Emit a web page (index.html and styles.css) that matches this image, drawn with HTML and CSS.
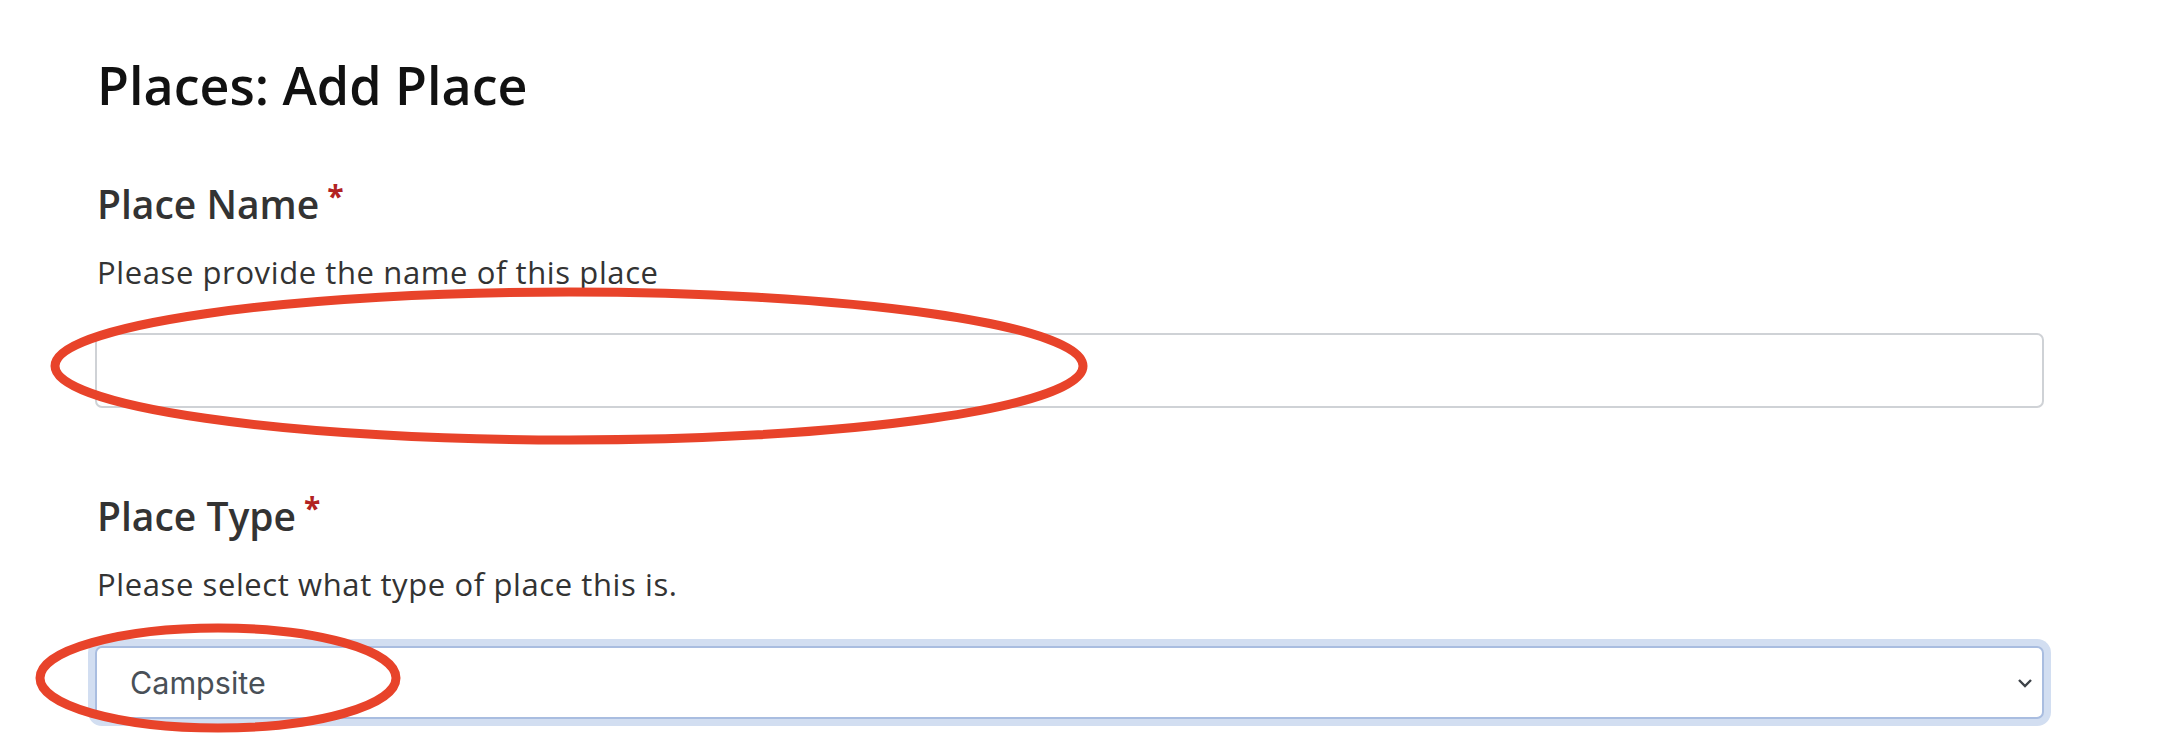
FILE: index.html
```html
<!DOCTYPE html>
<html lang="en">
<head>
    <meta charset="UTF-8">
    <meta name="viewport" content="width=device-width, initial-scale=1.0">
    <title>Places: Add Place</title>
    <link rel="stylesheet" href="styles.css">
</head>
<body>

    <div class="page">
        <h2 class="page-title">Places: Add Place</h2>

        <form id="placeForm">
            <div class="field field-name">
                <label for="placeName">Place Name<span class="required">*</span></label>
                <p class="help">Please provide the name of this place</p>
                <div class="control-wrap">
                    <input type="text" id="placeName" class="control">
                    <!-- annotation circle -->
                    <svg class="mark mark-name" viewBox="0 0 1038 158" aria-hidden="true">
                        <ellipse cx="519" cy="79" rx="514" ry="74" />
                    </svg>
                </div>
            </div>

            <div class="field field-type">
                <label for="placeType">Place Type<span class="required">*</span></label>
                <p class="help">Please select what type of place this is.</p>
                <div class="control-wrap">
                    <select id="placeType" class="control select">
                        <option value="campsite">Campsite</option>
                        <option value="hut">Hut</option>
                        <option value="lodge">Lodge</option>
                    </select>
                    <svg class="chevron" viewBox="0 0 16 16" aria-hidden="true">
                        <path d="M2 5l6 6 6-6" />
                    </svg>
                    <svg class="mark mark-type" viewBox="0 0 366 110" aria-hidden="true">
                        <ellipse cx="183" cy="55" rx="178" ry="50" />
                    </svg>
                </div>
            </div>
        </form>
    </div>

</body>
</html>
```

FILE: styles.css
```css
body {
    margin: 0;
    background-color: #ffffff;
    font-family: "Open Sans", "Noto Sans", sans-serif;
    color: #333333;
}
.page {
    padding: 57px 122px 60px 95px;
}
.page-title {
    margin: 0 0 0 2px;
    font-size: 52px;
    font-weight: 600;
    line-height: 55px;
    color: #111111;
}
.field label {
    display: block;
    margin: 0 0 0 2px;
    font-size: 39px;
    font-weight: 600;
    line-height: 46px;
    color: #333333;
}
.field-name label {
    margin-top: 69px;
}
.field-type label {
    margin-top: 85px;
}
.required {
    color: #b22222;
    font-size: 30px;
    font-weight: 700;
    vertical-align: top;
    margin-left: 8px;
    line-height: 30px;
}
.help {
    margin: 27px 0 0 2px;
    font-size: 31px;
    letter-spacing: 0.6px;
    line-height: 36px;
    color: #333333;
}
.control-wrap {
    position: relative;
    margin-top: 43px;
}
.field-type .control-wrap {
    margin-top: 44px;
}
.control {
    display: block;
    width: 100%;
    box-sizing: border-box;
    height: 75px;
    margin: 0;
    padding: 0 33px;
    border: 2px solid #cfd2d6;
    border-radius: 7px;
    background: #ffffff;
    font-family: Inter, Roboto, sans-serif;
    font-size: 30.5px;
    color: #495057;
}
.select {
    -webkit-appearance: none;
    appearance: none;
    height: 73px;
    border-color: #a9bde0;
    box-shadow: 0 0 0 7px #d2def1;
    outline: none;
}
.chevron {
    position: absolute;
    right: 11px;
    top: 29px;
    width: 16px;
    height: 16px;
    fill: none;
    stroke: #3d4248;
    stroke-width: 2.4;
}
.mark {
    position: absolute;
    fill: none;
    stroke: #e8432a;
    stroke-width: 9;
    pointer-events: none;
    overflow: visible;
}
.mark-name {
    left: -45px;
    top: -46px;
    width: 1038px;
    height: 158px;
}
.mark-type {
    left: -60px;
    top: -23px;
    width: 366px;
    height: 110px;
}
```
